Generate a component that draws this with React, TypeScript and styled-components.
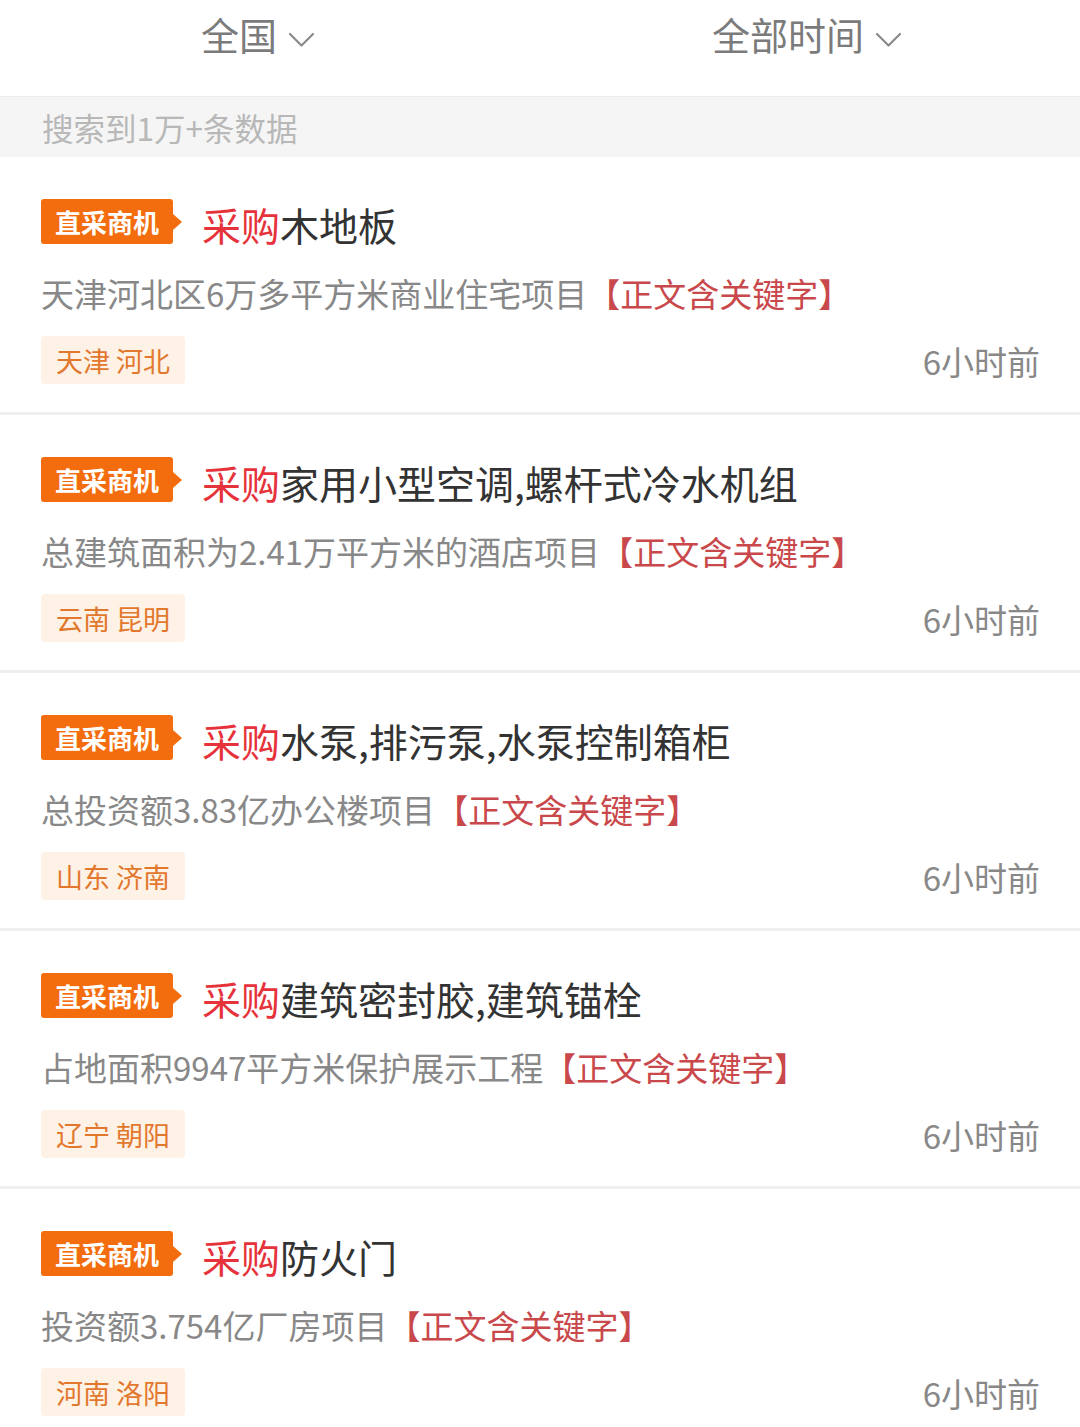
import React from "react";
import styled, { createGlobalStyle } from "styled-components";

const GlobalStyle = createGlobalStyle`
  html, body { margin: 0; padding: 0; background: #fff; }
  body { font-family: "Noto Sans CJK SC", "Noto Sans", sans-serif; }
  * { box-sizing: border-box; }
`;

const Page = styled.div`
  width: 1080px;
  background: #fff;
`;

const Header = styled.div`
  height: 97px;
  display: grid;
  grid-template-columns: 1fr 1fr;
  align-items: start;
  padding-top: 10px;
  border-bottom: 1px solid #ececec;
`;

const FilterButton = styled.div<{ $shift: number }>`
  display: flex;
  justify-content: center;
  align-items: center;
  gap: 11px;
  font-size: 38px;
  line-height: 48px;
  color: #7b7b7b;
  margin-right: ${(p) => p.$shift}px;
`;

const Chevron = () => (
  <svg width="27" height="16" viewBox="0 0 27 16" fill="none" style={{ marginTop: 11 }}>
    <path d="M2 2 L13.5 13.5 L25 2" stroke="#8a8a8a" strokeWidth="2.2" strokeLinecap="round" strokeLinejoin="round" />
  </svg>
);

const ResultBar = styled.div`
  height: 60px;
  background: #f5f5f5;
  padding-left: 42px;
  display: flex;
  align-items: center;
  font-size: 31.5px;
  color: #b8b8b8;
`;

const Item = styled.div`
  padding: 42px 40px 28px 41px;
  border-bottom: 3px solid #efefef;
`;

const TitleRow = styled.div`
  display: flex;
  align-items: center;
  height: 45px;
`;

const Badge = styled.div`
  position: relative;
  height: 45px;
  width: 132px;
  background: #f36c0d;
  border-radius: 3px;
  color: #fff;
  font-weight: 700;
  font-size: 26px;
  display: flex;
  align-items: center;
  justify-content: center;
  margin-right: 29px;
  &::after {
    content: "";
    position: absolute;
    right: -9px;
    top: 50%;
    transform: translateY(-50%);
    border-top: 8px solid transparent;
    border-bottom: 8px solid transparent;
    border-left: 9px solid #f36c0d;
  }
`;

const Title = styled.div`
  font-size: 39px;
  line-height: 45px;
  color: #333;
  white-space: nowrap;
  padding-top: 6px;
`;

const Hot = styled.span`
  color: #e6333b;
`;

const Desc = styled.div`
  margin-top: 27px;
  font-size: 33px;
  line-height: 45px;
  color: #888;
  white-space: nowrap;
`;

const Keyword = styled.span`
  color: #c9484b;
`;

const MetaRow = styled.div`
  margin-top: 20px;
  display: flex;
  justify-content: space-between;
  align-items: center;
  height: 48px;
`;

const Location = styled.div`
  height: 48px;
  padding: 0 15px;
  background: #fef1e5;
  border-radius: 4px;
  color: #e2782d;
  font-size: 27px;
  display: flex;
  align-items: center;
  white-space: pre;
`;

const Time = styled.div`
  font-size: 33px;
  color: #888;
  margin-top: 2px;
`;

type Entry = { title: string; desc: string; loc: string; time: string };

const entries: Entry[] = [
  { title: "木地板", desc: "天津河北区6万多平方米商业住宅项目", loc: "天津 河北", time: "6小时前" },
  { title: "家用小型空调,螺杆式冷水机组", desc: "总建筑面积为2.41万平方米的酒店项目", loc: "云南 昆明", time: "6小时前" },
  { title: "水泵,排污泵,水泵控制箱柜", desc: "总投资额3.83亿办公楼项目", loc: "山东 济南", time: "6小时前" },
  { title: "建筑密封胶,建筑锚栓", desc: "占地面积9947平方米保护展示工程", loc: "辽宁 朝阳", time: "6小时前" },
  { title: "防火门", desc: "投资额3.754亿厂房项目", loc: "河南 洛阳", time: "6小时前" },
];

export default function App() {
  return (
    <Page>
      <GlobalStyle />
      <Header>
        <FilterButton $shift={24}>
          全国
          <Chevron />
        </FilterButton>
        <FilterButton $shift={6}>
          全部时间
          <Chevron />
        </FilterButton>
      </Header>
      <ResultBar>搜索到1万+条数据</ResultBar>
      {entries.map((e, i) => (
        <Item key={i}>
          <TitleRow>
            <Badge>直采商机</Badge>
            <Title>
              <Hot>采购</Hot>
              {e.title}
            </Title>
          </TitleRow>
          <Desc>
            {e.desc}
            <Keyword>【正文含关键字】</Keyword>
          </Desc>
          <MetaRow>
            <Location>{e.loc}</Location>
            <Time>{e.time}</Time>
          </MetaRow>
        </Item>
      ))}
    </Page>
  );
}
